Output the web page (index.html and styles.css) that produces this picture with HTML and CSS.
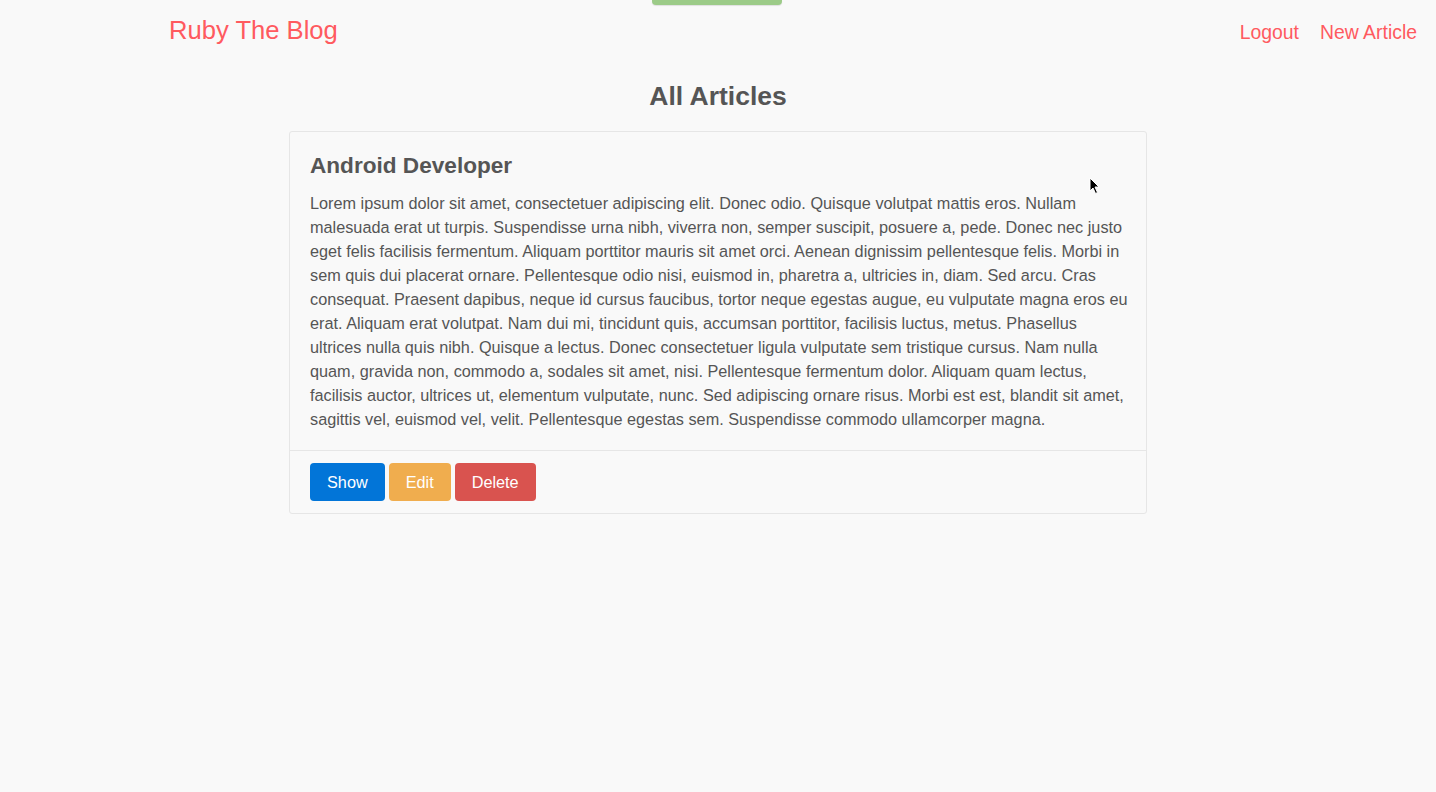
FILE: index.html
```html
<!DOCTYPE html>
<html lang="en">
<head>
<meta charset="utf-8">
<title>Ruby The Blog</title>
<link rel="stylesheet" href="styles.css">
</head>
<body>
<div class="flash"></div>
<nav class="navbar">
  <a class="brand" href="#">Ruby The Blog</a>
  <div class="nav-links">
    <a href="#">Logout</a>
    <a href="#">New Article</a>
  </div>
</nav>
<main class="content">
  <h1 class="page-title">All Articles</h1>
  <div class="card">
    <div class="card-body">
      <h2 class="card-title">Android Developer</h2>
      <p class="card-text">Lorem ipsum dolor sit amet, consectetuer adipiscing elit. Donec odio. Quisque volutpat mattis eros. Nullam malesuada erat ut turpis. Suspendisse urna nibh, viverra non, semper suscipit, posuere a, pede. Donec nec justo eget felis facilisis fermentum. Aliquam porttitor mauris sit amet orci. Aenean dignissim pellentesque felis. Morbi in sem quis dui placerat ornare. Pellentesque odio nisi, euismod in, pharetra a, ultricies in, diam. Sed arcu. Cras consequat. Praesent dapibus, neque id cursus faucibus, tortor neque egestas augue, eu vulputate magna eros eu erat. Aliquam erat volutpat. Nam dui mi, tincidunt quis, accumsan porttitor, facilisis luctus, metus. Phasellus ultrices nulla quis nibh. Quisque a lectus. Donec consectetuer ligula vulputate sem tristique cursus. Nam nulla quam, gravida non, commodo a, sodales sit amet, nisi. Pellentesque fermentum dolor. Aliquam quam lectus, facilisis auctor, ultrices ut, elementum vulputate, nunc. Sed adipiscing ornare risus. Morbi est est, blandit sit amet, sagittis vel, euismod vel, velit. Pellentesque egestas sem. Suspendisse commodo ullamcorper magna.</p>
    </div>
    <div class="card-footer">
      <a class="btn btn-primary" href="#">Show</a>
      <a class="btn btn-warning" href="#">Edit</a>
      <a class="btn btn-danger" href="#">Delete</a>
    </div>
  </div>
</main>
<svg class="cursor" width="12" height="18" viewBox="0 0 12 18"><path d="M1 1 L1 14 L4 11 L6.5 16.5 L8.5 15.5 L6 10 L10 10 Z" fill="#000" stroke="#fff" stroke-width="1"/></svg>
</body>
</html>
```
FILE: styles.css
```css
html, body {
  margin: 0;
  padding: 0;
}
body {
  background: #f9f9f9;
  font-family: "Liberation Sans", Arial, sans-serif;
  color: #555;
  min-height: 792px;
  position: relative;
}
a { text-decoration: none; }
.flash {
  position: absolute;
  top: 0;
  left: 652px;
  width: 130px;
  height: 5px;
  background: #9ccb88;
  border-radius: 0 0 4px 4px;
  box-shadow: 0 1px 1px rgba(0,0,0,0.1);
}
.navbar {
  display: flex;
  justify-content: space-between;
  align-items: baseline;
  padding: 16px 19px 0 169px;
  height: 44px;
}
.brand {
  color: #ff5a5f;
  font-size: 25.6px;
}
.nav-links {
  display: flex;
  gap: 21px;
}
.nav-links a {
  color: #ff5a5f;
  font-size: 19.4px;
}
.content {
  display: flex;
  flex-direction: column;
  align-items: center;
}
.page-title {
  margin: 20px 0 19px;
  font-size: 26.5px;
  font-weight: bold;
  line-height: 32px;
  color: #555;
}
.card {
  width: 856px;
  border: 1px solid #e6e6e6;
  border-radius: 3px;
  background: #f9f9f9;
}
.card-body {
  padding: 20px 14px 19px 20px;
}
.card-title {
  margin: 0 0 11px;
  font-size: 22.6px;
  line-height: 28px;
  font-weight: bold;
  color: #555;
}
.card-text {
  margin: 0;
  font-size: 16.25px;
  line-height: 24px;
}
.card-footer {
  border-top: 1px solid #e6e6e6;
  padding: 12px 20px 12px;
  display: flex;
  gap: 4px;
}
.btn {
  display: inline-block;
  color: #fff;
  font-size: 16.25px;
  line-height: 22px;
  padding: 8px 17px;
  border-radius: 4px;
}
.btn-primary { background: #0275d8; }
.btn-warning { background: #f0ad4e; }
.btn-danger { background: #d9534f; }
.cursor {
  position: absolute;
  left: 1089px;
  top: 177px;
}
```
